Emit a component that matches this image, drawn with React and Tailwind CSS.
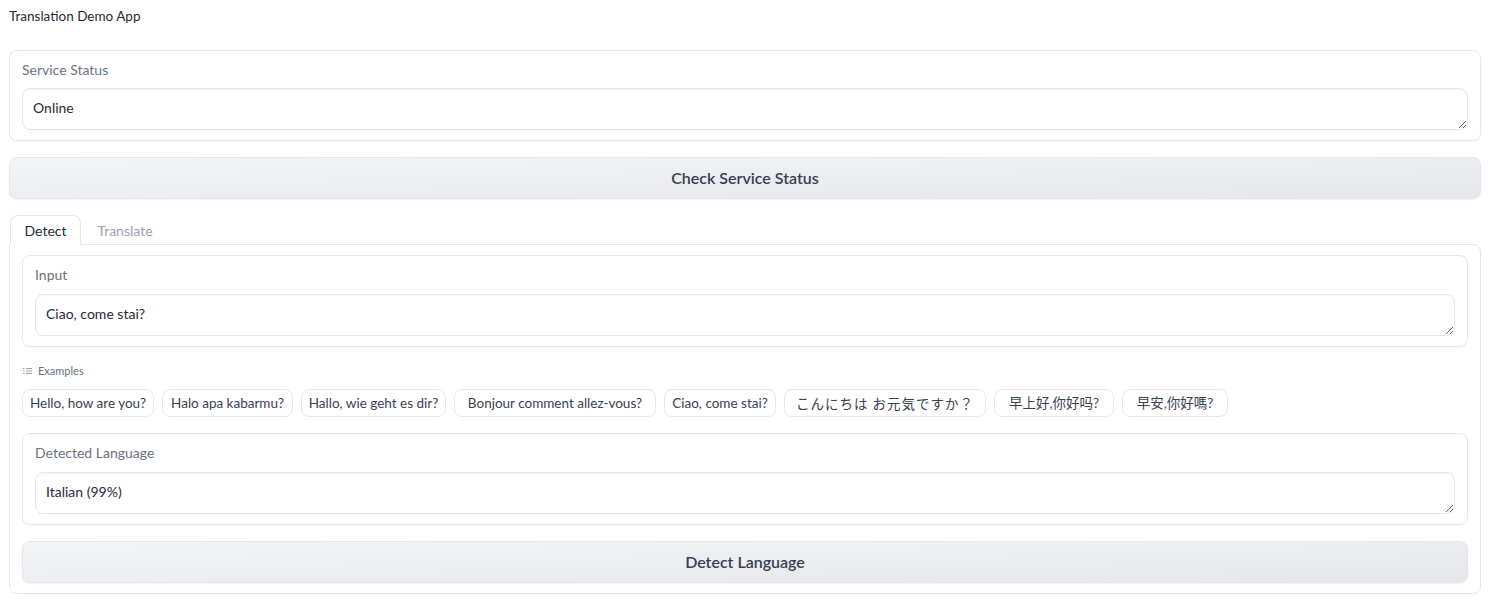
import React, { useState } from 'react';

const examples = [
  { text: 'Hello, how are you?', w: 'w-[132px]' },
  { text: 'Halo apa kabarmu?', w: 'w-[131px]' },
  { text: 'Hallo, wie geht es dir?', w: 'w-[145px]' },
  { text: 'Bonjour comment allez-vous?', w: 'w-[202px]' },
  { text: 'Ciao, come stai?', w: 'w-[112px]' },
  { text: 'こんにちは お元気ですか？', w: 'w-[202px]', jp: true },
  { text: '早上好,你好吗?', w: 'w-[120px]' },
  { text: '早安,你好嗎?', w: 'w-[106px]' },
];

// Gradio-style textbox block
const TextBlock = ({ label, value, onChange, tall }) => (
  <div className="rounded-lg border border-[#e5e7eb] bg-white px-3 py-[10px] shadow-[0_1px_2px_rgba(0,0,0,0.03)]">
    <div className={`${tall ? 'mb-[10px]' : 'mb-[9px]'} text-[14px] leading-[18px] text-[#6b7280]`}>{label}</div>
    <textarea
      rows={1}
      value={value}
      onChange={(e) => onChange && onChange(e.target.value)}
      className="block h-[42px] w-full resize-y rounded-lg border border-[#e5e7eb] bg-white px-[10px] pt-[9px] pb-[11px] text-[14px] leading-[20px] text-[#1f2937] shadow-[inset_0_1px_2px_rgba(0,0,0,0.04)] outline-none"
    />
  </div>
);

const BigButton = ({ children, onClick }) => (
  <button
    onClick={onClick}
    className="h-[42px] w-full rounded-lg border border-[#e5e7eb] bg-linear-to-br from-[#f3f4f6] to-[#e5e7eb] text-[16px] font-semibold text-[#374151] shadow-[0_1px_2px_rgba(0,0,0,0.06)]"
  >
    {children}
  </button>
);

export default function App() {
  const [tab, setTab] = useState('detect');
  const [input, setInput] = useState('Ciao, come stai?');

  const tabOn = 'relative z-10 -mb-px h-[30px] rounded-t-lg border border-[#e5e7eb] border-b-white bg-white text-[14px] text-[#1f2937]';
  const tabOff = 'h-[30px] text-[14px] text-[#9ca3af]';

  return (
    <div className="min-h-screen bg-white pl-[9px] pr-[23px] font-['Lato','Noto_Sans_CJK_SC',sans-serif]">
      <div className="pt-[7px] text-[13.5px] leading-[18px] text-[#1f2937]">Translation Demo App</div>

      <div className="mt-[25px] flex flex-col gap-4">
        <TextBlock label="Service Status" value="Online" />

        <BigButton>Check Service Status</BigButton>

        {/* Tabs */}
        <div>
          <div className="flex h-[29px] items-start">
            <button onClick={() => setTab('detect')} className={`ml-px w-[71px] ${tab === 'detect' ? tabOn : tabOff}`}>
              Detect
            </button>
            <button onClick={() => setTab('translate')} className={`w-[88px] ${tab === 'translate' ? tabOn : tabOff}`}>
              Translate
            </button>
          </div>

          <div className="flex flex-col gap-4 rounded-b-lg rounded-tr-lg border border-[#e5e7eb] px-3 py-[10px]">
            <TextBlock label="Input" value={input} onChange={setInput} tall />

            <div>
              <div className="flex h-4 items-center gap-[6px] pl-px text-[11px] text-[#6b7280]">
                <svg width="9" height="8" viewBox="0 0 9 8" fill="none" stroke="#9ca3af" strokeWidth="1">
                  <path d="M0 1.5h1.5M3 1.5h6M0 4h1.5M3 4h6M0 6.5h1.5M3 6.5h6" />
                </svg>
                <span>Examples</span>
              </div>
              <div className="mt-[10px] flex flex-wrap gap-2">
                {examples.map((ex) => (
                  <button
                    key={ex.text}
                    onClick={() => setInput(ex.text)}
                    className={`${ex.w} h-[28px] rounded-lg border border-[#e5e7eb] bg-white text-center text-[13.5px] text-[#374151] ${
                      ex.jp ? "font-['Noto_Sans_CJK_JP',sans-serif] tracking-[1px]" : ''
                    }`}
                  >
                    {ex.text}
                  </button>
                ))}
              </div>
            </div>

            <TextBlock label="Detected Language" value="Italian (99%)" tall />

            <BigButton>Detect Language</BigButton>
          </div>
        </div>
      </div>
    </div>
  );
}
